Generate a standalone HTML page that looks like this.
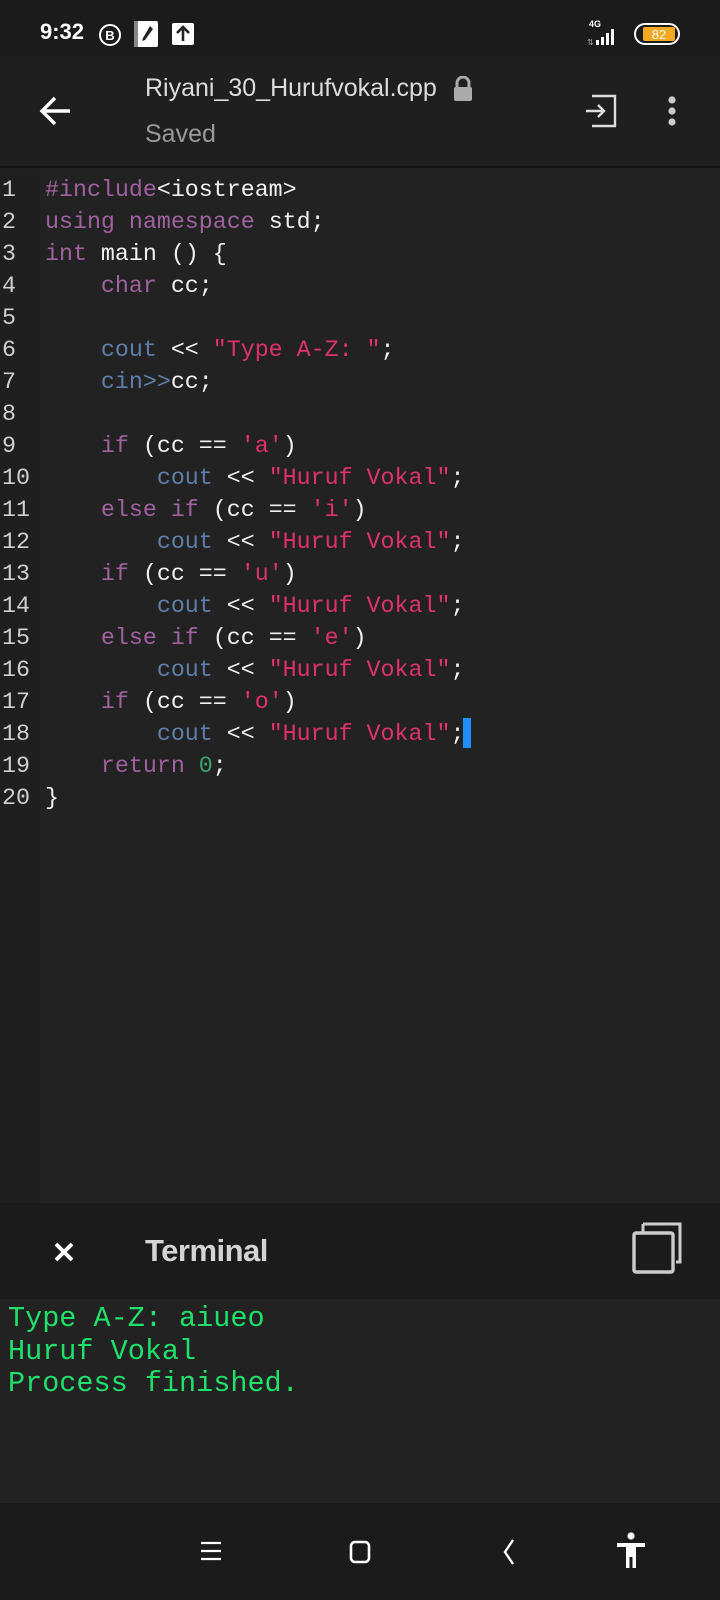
<!DOCTYPE html>
<html><head><meta charset="utf-8"><style>
*{margin:0;padding:0;box-sizing:border-box}
body{width:720px;height:1600px;background:#222;position:relative;overflow:hidden;font-family:"Liberation Sans",sans-serif}
.abs{position:absolute}
#status{left:0;top:0;width:720px;height:56px;background:#1b1b1b}
#appbar{left:0;top:56px;width:720px;height:112px;background:#1f1f1f;border-bottom:2px solid #141414}
#gutter{left:0;top:170px;width:40px;height:1033px;background:#1f1f1f}
.code{font-family:"Liberation Mono",monospace;font-size:23.3px;line-height:32px;white-space:pre;color:#f0f0f0}
#nums{left:2px;top:174px;color:#d0d0d0}
#src{left:45px;top:174px}
.k{color:#a0619f}.b{color:#5f7ea9}.s{color:#e0316b}.n{color:#3ba46d}
#thead{left:0;top:1203px;width:720px;height:96px;background:#1b1b1b}
#term{left:8px;top:1303px;font-family:"Liberation Mono",monospace;font-size:28.5px;line-height:32.5px;color:#1fe06a;white-space:pre}
#nav{left:0;top:1503px;width:720px;height:97px;background:#1b1b1b}
</style></head><body>
<div id="status" class="abs">
 <div class="abs" style="left:40px;top:19px;color:#fff;font-size:22px;font-weight:bold">9:32</div>
 <svg class="abs" style="left:97px;top:22px" width="26" height="26" viewBox="0 0 26 26"><circle cx="13" cy="13" r="10" fill="none" stroke="#fff" stroke-width="2"/><text x="13" y="18" font-size="13" font-weight="bold" fill="#fff" text-anchor="middle" font-family="Liberation Sans">B</text></svg>
 <svg class="abs" style="left:133px;top:20px" width="26" height="28" viewBox="0 0 26 28"><rect x="1" y="1" width="24" height="26" rx="2" fill="#fff"/><rect x="1" y="1" width="4" height="26" fill="#888"/><path d="M17 6 L20 9 L12 20 L9 21 L10 18 Z" fill="#222"/></svg>
 <svg class="abs" style="left:171px;top:22px" width="24" height="24" viewBox="0 0 24 24"><rect x="1" y="1" width="22" height="22" rx="2" fill="#fff"/><path d="M12 5 L12 19 M6 11 L12 5 L18 11" stroke="#222" stroke-width="2.6" fill="none"/></svg>
 <div class="abs" style="left:589px;top:19px;color:#fff;font-size:9px;font-weight:bold">4G</div>
 <svg class="abs" style="left:586px;top:28px" width="36" height="18" viewBox="0 0 36 18"><rect x="10" y="12" width="3" height="5" fill="#fff"/><rect x="15" y="9" width="3" height="8" fill="#fff"/><rect x="20" y="5" width="3" height="12" fill="#fff"/><rect x="25" y="1" width="3" height="16" fill="#fff"/><text x="1" y="17" font-size="8" fill="#aaa">⇅</text></svg>
 <svg class="abs" style="left:634px;top:23px" width="48" height="22" viewBox="0 0 48 22"><rect x="1" y="1" width="44" height="20" rx="10" fill="none" stroke="#fff" stroke-width="2"/><rect x="9" y="4" width="32" height="14" rx="2" fill="#f4a720"/><text x="25" y="16" font-size="13" fill="#fff" text-anchor="middle" font-family="Liberation Sans">82</text></svg>
</div>
<div id="appbar" class="abs">
 <svg class="abs" style="left:38px;top:37px" width="36" height="36" viewBox="0 0 36 36"><path d="M32 18 H5 M17 5 L4 18 L17 31" stroke="#fff" stroke-width="3.4" fill="none"/></svg>
 <div class="abs" style="left:145px;top:18px;color:#dcdcdc;font-size:25px">Riyani_30_Hurufvokal.cpp</div>
 <svg class="abs" style="left:452px;top:20px" width="22" height="26" viewBox="0 0 22 26"><path d="M5 11 V7 a6 6 0 0 1 12 0 V11" stroke="#aaa" stroke-width="3" fill="none"/><rect x="2" y="11" width="18" height="14" rx="2" fill="#aaa"/></svg>
 <div class="abs" style="left:145px;top:64px;color:#9a9a9a;font-size:25px">Saved</div>
 <svg class="abs" style="left:584px;top:38px" width="34" height="34" viewBox="0 0 34 34"><path d="M8 2 H31 V32 H8" stroke="#ddd" stroke-width="2.4" fill="none"/><path d="M2 17 H20 M14 11 L20 17 L14 23" stroke="#ddd" stroke-width="2.4" fill="none"/></svg>
 <svg class="abs" style="left:665px;top:40px" width="14" height="30" viewBox="0 0 14 30"><circle cx="7" cy="4" r="3.6" fill="#ccc"/><circle cx="7" cy="15" r="3.6" fill="#ccc"/><circle cx="7" cy="26" r="3.6" fill="#ccc"/></svg>
</div>
<div id="gutter" class="abs"></div>
<div id="nums" class="abs code">1
2
3
4
5
6
7
8
9
10
11
12
13
14
15
16
17
18
19
20</div>
<div id="src" class="abs code"><span class="k">#include</span>&lt;iostream&gt;
<span class="k">using namespace</span> std;
<span class="k">int</span> main () {
    <span class="k">char</span> cc;

    <span class="b">cout</span> &lt;&lt; <span class="s">"Type A-Z: "</span>;
    <span class="b">cin&gt;&gt;</span>cc;

    <span class="k">if</span> (cc == <span class="s">'a'</span>)
        <span class="b">cout</span> &lt;&lt; <span class="s">"Huruf Vokal"</span>;
    <span class="k">else if</span> (cc == <span class="s">'i'</span>)
        <span class="b">cout</span> &lt;&lt; <span class="s">"Huruf Vokal"</span>;
    <span class="k">if</span> (cc == <span class="s">'u'</span>)
        <span class="b">cout</span> &lt;&lt; <span class="s">"Huruf Vokal"</span>;
    <span class="k">else if</span> (cc == <span class="s">'e'</span>)
        <span class="b">cout</span> &lt;&lt; <span class="s">"Huruf Vokal"</span>;
    <span class="k">if</span> (cc == <span class="s">'o'</span>)
        <span class="b">cout</span> &lt;&lt; <span class="s">"Huruf Vokal"</span>;
    <span class="k">return</span> <span class="n">0</span>;
}</div>
<div class="abs" style="left:463px;top:718px;width:8px;height:30px;background:#1e8fff"></div>
<div id="thead" class="abs">
 <svg class="abs" style="left:53px;top:38px" width="22" height="22" viewBox="0 0 22 22"><path d="M3 3 L19 19 M19 3 L3 19" stroke="#fff" stroke-width="4"/></svg>
 <div class="abs" style="left:145px;top:30px;color:#d4d4d4;font-size:31px;font-weight:bold;letter-spacing:-0.5px">Terminal</div>
 <svg class="abs" style="left:632px;top:19px" width="50" height="52" viewBox="0 0 50 52"><path d="M11 2 H48 V40 H44" stroke="#ccc" stroke-width="3" fill="none"/><path d="M11 2 V10" stroke="#ccc" stroke-width="3"/><rect x="2" y="11" width="39" height="39" rx="2" fill="none" stroke="#ccc" stroke-width="3.4"/></svg>
</div>
<div id="term" class="abs">Type A-Z: aiueo
Huruf Vokal
Process finished.</div>
<div id="nav" class="abs">
 <svg class="abs" style="left:200px;top:38px" width="22" height="20" viewBox="0 0 22 20"><path d="M1 2 H21 M1 10 H21 M1 18 H21" stroke="#fff" stroke-width="2.2"/></svg>
 <svg class="abs" style="left:349px;top:37px" width="22" height="24" viewBox="0 0 22 24"><rect x="2" y="2" width="18" height="20" rx="4" fill="none" stroke="#fff" stroke-width="2.6"/></svg>
 <svg class="abs" style="left:502px;top:35px" width="14" height="28" viewBox="0 0 14 28"><path d="M11 2 L3 14 L11 26" stroke="#fff" stroke-width="2.4" fill="none"/></svg>
 <svg class="abs" style="left:616px;top:29px" width="30" height="38" viewBox="0 0 30 38"><circle cx="15" cy="4" r="3.6" fill="#fff"/><path d="M1 11 H29 V15 H20 V36 H16.5 V25 H13.5 V36 H10 V15 H1 Z" fill="#fff"/></svg>
</div>
</body></html>
